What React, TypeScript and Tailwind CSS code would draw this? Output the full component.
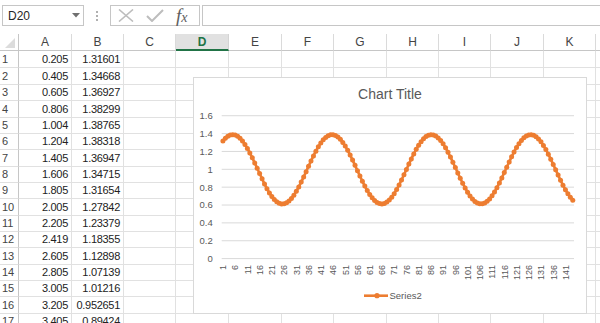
import React from 'react'

const COLS = [
  { name: 'A', w: 'w-[53px]' },
  { name: 'B', w: 'w-[52px]' },
  { name: 'C', w: 'w-[52px]' },
  { name: 'D', w: 'w-[53px]' },
  { name: 'E', w: 'w-[53px]' },
  { name: 'F', w: 'w-[52px]' },
  { name: 'G', w: 'w-[53px]' },
  { name: 'H', w: 'w-[52px]' },
  { name: 'I', w: 'w-[52px]' },
  { name: 'J', w: 'w-[53px]' },
  { name: 'K', w: 'w-[52px]' },
]

const ROWS: [string, string][] = [
  ['0.205', '1.31601'],
  ['0.405', '1.34668'],
  ['0.605', '1.36927'],
  ['0.806', '1.38299'],
  ['1.004', '1.38765'],
  ['1.204', '1.38318'],
  ['1.405', '1.36947'],
  ['1.606', '1.34715'],
  ['1.805', '1.31654'],
  ['2.005', '1.27842'],
  ['2.205', '1.23379'],
  ['2.419', '1.18355'],
  ['2.605', '1.12898'],
  ['2.805', '1.07139'],
  ['3.005', '1.01216'],
  ['3.205', '0.952651'],
  ['3.405', '0.89424'],
]

const HEIGHTS = ['h-[17px]', 'h-[17px]', 'h-[16px]', 'h-[17px]', 'h-[16px]', 'h-[16px]', 'h-[17px]', 'h-[16px]', 'h-[16px]', 'h-[17px]', 'h-[16px]', 'h-[16px]', 'h-[17px]', 'h-[16px]', 'h-[16px]', 'h-[17px]', 'h-[16px]']

// series values: real data for the first rows, then the same wave continued
const N = 144
const values: number[] = []
for (let i = 0; i < N; i++) {
  if (i < ROWS.length) values.push(parseFloat(ROWS[i][1]))
  else {
    const x = 0.205 + i * 0.2
    values.push(1 + 0.388 * Math.cos(0.774 * (x - 1.005)))
  }
}

const PLOT_L = 27.7
const PLOT_R = 380
const Y0 = 180.6
const PER = 89.3
const catW = (PLOT_R - PLOT_L) / N
const cx = (i: number) => PLOT_L + (i + 0.5) * catW
const cy = (v: number) => Y0 - v * PER

function Chart() {
  const pts = values.map((v, i) => `${cx(i).toFixed(2)},${cy(v).toFixed(2)}`).join(' ')
  const ticks = [0, 0.2, 0.4, 0.6, 0.8, 1, 1.2, 1.4, 1.6]
  const xLabels: number[] = []
  for (let i = 1; i <= N; i += 5) xLabels.push(i)

  return (
    <div className="absolute left-[193px] top-[77px] w-[394px] h-[237px] border border-[#d9d9d9] bg-white">
      <svg width="392" height="235" viewBox="0 0 392 235" className="block font-['Liberation_Sans',sans-serif]">
        <text x="196" y="21" textAnchor="middle" className="fill-[#595959] text-[14px]">Chart Title</text>

        {ticks.map(t => (
          <g key={t}>
            <line x1={PLOT_L} x2={PLOT_R} y1={cy(t)} y2={cy(t)} stroke="#d9d9d9" strokeWidth="1" />
            <text x="18.7" y={cy(t) + 3.4} textAnchor="end" className="fill-[#595959] text-[9.5px]">
              {t === 0 || t === 1 ? String(t) : t.toFixed(1)}
            </text>
          </g>
        ))}

        {xLabels.map(n => {
          const x = cx(n - 1) + 3.3
          return (
            <text key={n} x={x} y="187" textAnchor="end" transform={`rotate(-90 ${x} 187)`} className="fill-[#595959] text-[9px]">
              {n}
            </text>
          )
        })}

        <polyline points={pts} fill="none" stroke="#ed7d31" strokeWidth="2.6" strokeLinejoin="round" />
        {values.map((v, i) => (
          <circle key={i} cx={cx(i)} cy={cy(v)} r="2.5" fill="#ed7d31" />
        ))}

        {/* legend */}
        <line x1="170" x2="194" y1="217.7" y2="217.7" stroke="#ed7d31" strokeWidth="2.6" />
        <circle cx="183" cy="217.7" r="2.6" fill="#ed7d31" />
        <text x="195.5" y="221" className="fill-[#595959] text-[9.5px]">Series2</text>
      </svg>
    </div>
  )
}

export default function App() {
  return (
    <div className="relative w-[600px] h-[323px] overflow-hidden bg-white font-['Liberation_Sans',sans-serif]">
      {/* Formula bar */}
      <div className="h-[34px] flex items-start pt-[5px] pl-[2px]">
        <div className="w-[82px] h-[21px] border border-[#c6c6c6] flex items-center justify-between pl-[5px] pr-[3px]">
          <span className="text-[12px] text-[#262626]">D20</span>
          <svg width="8" height="5" viewBox="0 0 8 5"><path d="M0 0 H8 L4 4.5 Z" fill="#707070" /></svg>
        </div>
        <div className="w-[26px] h-[21px] flex flex-col items-center justify-center gap-[2px]">
          <span className="w-[2px] h-[2px] bg-[#b0b0b0]" />
          <span className="w-[2px] h-[2px] bg-[#b0b0b0]" />
          <span className="w-[2px] h-[2px] bg-[#b0b0b0]" />
        </div>
        <div className="w-[90px] h-[21px] border border-[#c6c6c6] flex items-center pl-[7px]">
          <svg width="16" height="13" viewBox="0 0 16 13">
            <path d="M1 0.5 L15 12.5 M15 0.5 L1 12.5" stroke="#bdbdbd" strokeWidth="1.6" fill="none" />
          </svg>
          <svg width="18" height="13" viewBox="0 0 18 13" className="ml-[12px]">
            <path d="M1 7 L6 12 L17 1" stroke="#bdbdbd" strokeWidth="2" fill="none" />
          </svg>
          <span className="ml-[12px] font-['Liberation_Serif',serif] italic text-[#606060] leading-none">
            <span className="text-[19px]">f</span><span className="text-[14px]">x</span>
          </span>
        </div>
        <div className="flex-1 ml-[2px] h-[21px] border border-[#c6c6c6] border-r-0" />
      </div>

      {/* Column headers */}
      <div className="flex h-[17px]">
        <div className="w-[19px] border-r border-b border-[#c6c6c6] flex items-end justify-end pr-[3px] pb-[2px]">
          <svg width="10" height="10" viewBox="0 0 10 10"><path d="M10 0 V10 H0 Z" fill="#dcdcdc" /></svg>
        </div>
        {COLS.map(c =>
          c.name === 'D' ? (
            <div key={c.name} className={`${c.w} border-r border-[#d4d4d4] bg-[#e1e1e1] border-b-2 border-b-[#217346] flex items-center justify-center text-[12px] font-bold text-[#217346]`}>
              {c.name}
            </div>
          ) : (
            <div key={c.name} className={`${c.w} border-r border-b border-r-[#dadada] border-b-[#c6c6c6] flex items-center justify-center text-[12px] text-[#444]`}>
              {c.name}
            </div>
          )
        )}
        <div className="flex-1 border-b border-[#c6c6c6]" />
      </div>

      {/* Rows */}
      {ROWS.map((r, i) => (
        <div key={i} className={`flex ${HEIGHTS[i]}`}>
          <div className="w-[19px] border-r border-r-[#c6c6c6] border-b border-b-[#e0e0e0] flex items-center pl-[2px] text-[11px] text-[#444]">
            {i + 1}
          </div>
          {COLS.map((c, j) => (
            <div key={c.name} className={`${c.w} border-r border-b border-[#e1e1e1] flex items-center justify-end pr-[3px] text-[11px] tracking-[-0.3px] text-[#222]`}>
              {j === 0 ? r[0] : j === 1 ? r[1] : ''}
            </div>
          ))}
          <div className="flex-1 border-b border-[#e1e1e1]" />
        </div>
      ))}

      <Chart />
    </div>
  )
}
